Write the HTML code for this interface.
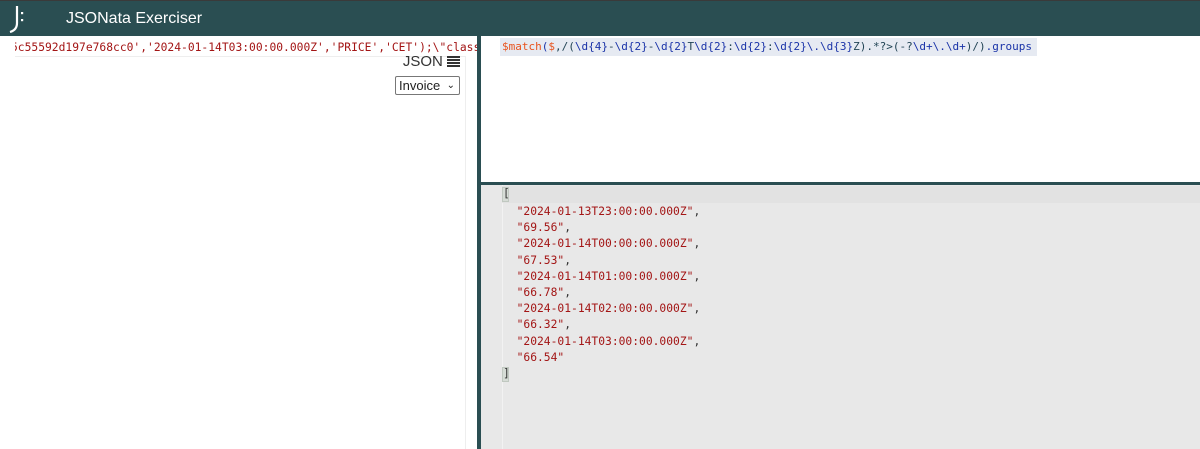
<!DOCTYPE html><html><head><style>
body{margin:0;width:1200px;height:449px;overflow:hidden;background:#fff;font-family:"Liberation Sans",sans-serif;position:relative}
.hdr{position:absolute;left:0;top:0;width:1200px;height:36px;background:#2a4e52;border-top:1px solid #3a3a3a;box-sizing:border-box}
.title{position:absolute;left:66px;top:9px;color:#fff;font-size:16px}
.mono{font-family:"DejaVu Sans Mono",monospace;white-space:pre;position:absolute}
.str{color:#a31515}
.kw{color:#e8531e}
.bl{color:#1a33a8}
.tl{color:#245}
</style></head><body>
<div class="hdr">
<svg style="position:absolute;left:6px;top:2px" width="22" height="30" viewBox="0 0 22 30"><path d="M11 3 V20 Q11 27 4 29" stroke="#fff" stroke-width="2.2" fill="none"/><rect x="15" y="9" width="2.2" height="2.2" fill="#fff"/><rect x="15" y="16" width="2.2" height="2.2" fill="#fff"/></svg>
<div class="title">JSONata Exerciser</div></div>
<div style="position:absolute;left:15px;top:36px;width:462px;height:20px;overflow:hidden">
<div class="mono str" style="left:-4px;top:4px;font-size:11.3px;line-height:16px">5c55592d197e768cc0','2024-01-14T03:00:00.000Z','PRICE','CET');\"class</div>
</div>
<div style="position:absolute;left:15px;top:56px;width:450px;height:1px;background:#eee"></div>
<div style="position:absolute;left:0;top:36px;width:465px;height:413px">
<div style="position:absolute;right:5px;top:17px;font-size:15px;color:#333">JSON <span style="display:inline-block;width:13px;height:11px;vertical-align:-1px;background:repeating-linear-gradient(#333 0 2px,#fff 2px 3px)"></span></div>
<div style="position:absolute;left:395px;top:40px;border:1px solid #777;border-radius:2px;font-size:13px;color:#222;line-height:17px;padding-left:3px;box-sizing:border-box;width:65px;height:19px">Invoice<span style="position:absolute;right:4px;top:0;font-size:10px">&#8964;</span></div>
</div>
<div style="position:absolute;left:465px;top:56px;width:1px;height:393px;background:#eee"></div>
<div style="position:absolute;left:477px;top:36px;width:4px;height:413px;background:#2a4e52"></div>
<div style="position:absolute;left:481px;top:182px;width:719px;height:3px;background:#2a4e52"></div>
<div style="position:absolute;left:500px;top:38px;width:537px;height:18px;background:#e6eaf2"></div>
<div class="mono" style="left:502px;top:39px;font-size:11px;line-height:16px"><span class="kw">$match</span><span class="bl">(</span><span class="kw">$</span><span class="tl">,/(</span><span class="bl">\d{4}</span><span class="tl">-</span><span class="bl">\d{2}</span><span class="tl">-</span><span class="bl">\d{2}</span><span class="tl">T</span><span class="bl">\d{2}</span><span class="tl">:</span><span class="bl">\d{2}</span><span class="tl">:</span><span class="bl">\d{2}\.\d{3}</span><span class="tl">Z).*?&gt;(-?</span><span class="bl">\d+\.\d+</span><span class="tl">)/)</span><span class="bl">.groups</span></div>
<div style="position:absolute;left:481px;top:185px;width:719px;height:264px;background:#e8e8e8"></div>
<div style="position:absolute;left:502px;top:185px;width:1px;height:264px;background:#f2f2f2"></div>
<div style="position:absolute;left:502px;top:186px;width:698px;height:17px;background:#e2e2e2"></div>
<div style="position:absolute;left:502px;top:187px;width:7px;height:15px;background:#d6dcd6;border:1px solid #c0c8c0;box-sizing:border-box"></div>
<div style="position:absolute;left:502px;top:367px;width:7px;height:15px;background:#d6dcd6;border:1px solid #c0c8c0;box-sizing:border-box"></div>
<div class="mono" style="left:503px;top:186px;font-size:11.3px;line-height:16px;color:#333">[</div>
<div class="mono" style="left:503px;top:204px;font-size:11.3px;line-height:16.2px;color:#333"><span class="str">  "2024-01-13T23:00:00.000Z"</span>,
<span class="str">  "69.56"</span>,
<span class="str">  "2024-01-14T00:00:00.000Z"</span>,
<span class="str">  "67.53"</span>,
<span class="str">  "2024-01-14T01:00:00.000Z"</span>,
<span class="str">  "66.78"</span>,
<span class="str">  "2024-01-14T02:00:00.000Z"</span>,
<span class="str">  "66.32"</span>,
<span class="str">  "2024-01-14T03:00:00.000Z"</span>,
<span class="str">  "66.54"</span>
]</div>
</body></html>
